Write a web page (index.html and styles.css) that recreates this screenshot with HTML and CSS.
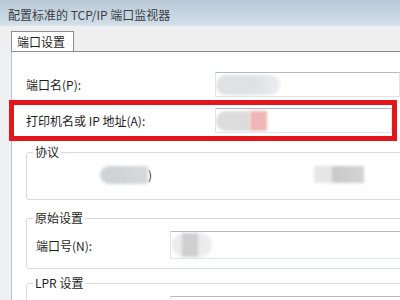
FILE: index.html
```html
<!DOCTYPE html>
<html lang="zh-CN">
<head>
    <meta charset="UTF-8">
    <meta name="viewport" content="width=device-width, initial-scale=1.0">
    <title>配置标准的 TCP/IP 端口监视器</title>
    <link rel="stylesheet" href="styles.css">
</head>
<body>
    <div class="window">
        <div class="titlebar">配置标准的 TCP/IP 端口监视器</div>
        <div class="tabs">
            <div class="tab">端口设置</div>
        </div>
        <div class="panel">
            <div class="row first">
                <label>端口名(P):</label>
                <div class="field"><span class="blot name-blot"></span></div>
            </div>
            <div class="row marked">
                <label>打印机名或 IP 地址(A):</label>
                <div class="field"><span class="blot addr-blot"></span><span class="blot addr-pink"></span></div>
            </div>

            <fieldset class="group proto">
                <legend>协议</legend>
                <div class="proto-body">
                    <span class="blot raw-blot"></span><span class="paren">)</span>
                    <span class="blot lpr-blot"></span>
                </div>
            </fieldset>

            <fieldset class="group raw">
                <legend>原始设置</legend>
                <div class="group-row">
                    <label>端口号(N):</label>
                    <div class="field tall"><span class="blot port-blot"></span></div>
                </div>
            </fieldset>

            <fieldset class="group lpr">
                <legend>LPR 设置</legend>
                <div class="group-row">
                    <label></label>
                    <div class="field tall"></div>
                </div>
            </fieldset>
        </div>
    </div>
</body>
</html>
```

FILE: styles.css
```css
body {
    margin: 0;
    padding: 0;
    overflow: hidden;
    background-color: #eef0f2;
    font-family: "Noto Sans CJK SC", "Noto Sans", sans-serif;
    font-size: 12px;
    color: #1e1e1e;
}

.window {
    width: 400px;
    height: 300px;
    overflow: hidden;
}

.titlebar {
    height: 26px;
    box-sizing: border-box;
    padding: 7px 0 0 8px;
    line-height: 15px;
    color: #3a3d42;
    background: linear-gradient(#bbc9d7, #cddbe6 85%, #d9e5ee);
}

.tabs {
    height: 25px;
    padding: 5px 0 0 11px;
    box-sizing: border-box;
    background-color: #efefef;
}
.tab {
    display: inline-block;
    height: 20px;
    line-height: 19px;
    padding: 0 7px 0 5px;
    box-sizing: border-box;
    background-color: #fff;
    border: 1px solid #898c95;
    border-bottom: none;
    position: relative;
    z-index: 1;
    width: 63px;
}

.panel {
    margin-left: 11px;
    height: 260px;
    background-color: #fff;
    border-top: 1px solid #898c95;
    border-left: 1px solid #b8c2cc;
}

.row {
    display: flex;
    align-items: center;
}
.row label {
    width: 189px;
    flex-shrink: 0;
}
.row.first {
    margin-top: 20px;
    padding-left: 14px;
    height: 25px;
}
.row.marked {
    margin: 3px 0 0 -3px;
    width: 388px;
    height: 41px;
    box-sizing: border-box;
    padding-left: 12px;
    border: 5px solid #e3161c;
}

.field {
    flex: 1;
    height: 25px;
    box-sizing: border-box;
    border: 1px solid #dfe4ea;
    border-top-color: #b4bac2;
    background-color: #fff;
    display: flex;
    align-items: center;
    overflow: hidden;
}
.field.tall {
    height: 28px;
}

.blot {
    display: inline-block;
    filter: blur(1.5px);
}
.name-blot {
    width: 64px;
    height: 20px;
    border-radius: 10px;
    background: linear-gradient(90deg, #dfe1e3 60%, #ececee);
}
.addr-blot {
    width: 34px;
    height: 20px;
    border-radius: 10px 0 0 10px;
    background-color: #dcdcdc;
}
.addr-pink {
    width: 17px;
    height: 20px;
    background-color: #f0b5b7;
}

.group {
    margin: 4px 0 0 14px;
    padding: 0 6px;
    width: 400px;
    border: 1px solid #d5d9dd;
    border-radius: 3px;
}
.group legend {
    padding: 0 2px;
    line-height: 14px;
    color: #1e1e1e;
}

.proto-body {
    height: 40px;
    display: flex;
    align-items: flex-start;
    padding-top: 7px;
    box-sizing: border-box;
}
.raw-blot {
    margin-left: 67px;
    width: 48px;
    height: 18px;
    border-radius: 9px 0 0 9px;
    background: linear-gradient(90deg, #cfd3d6 35%, #d9d9d9);
}
.paren {
    line-height: 18px;
    margin-left: 0;
}
.lpr-blot {
    margin-left: 162px;
    width: 50px;
    height: 17px;
    background: linear-gradient(90deg, #e6e6e6 35%, #c9c9c9 36%, #d3d3d3);
}

.raw {
    margin-top: 11px;
}
.lpr {
    margin-top: 7px;
}
.group-row {
    display: flex;
    align-items: center;
    padding: 6px 0 9px 3px;
}
.group-row label {
    width: 134px;
    flex-shrink: 0;
}
.port-blot {
    margin-left: 1px;
    width: 40px;
    height: 24px;
    border-radius: 12px;
    background: linear-gradient(90deg, #ececec 25%, #cfcfcf 26%, #cfcfcf 65%, #ececec 66%);
}
```
